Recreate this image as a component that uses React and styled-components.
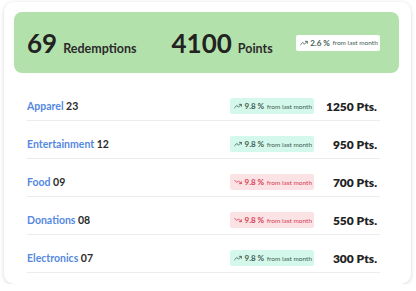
import styled, { createGlobalStyle } from "styled-components";
import { TrendingUp, TrendingDown } from "lucide-react";

const GlobalStyle = createGlobalStyle`
    body {
        margin: 0;
        background: #ffffff;
        font-family: Lato, "Noto Sans", sans-serif;
    }
`

const Card = styled.div`
    width: 407px;
    margin: 2px 0 0 4px;
    padding: 10px 12px 11px 10px;
    box-sizing: border-box;
    background: #ffffff;
    border-radius: 10px;
    box-shadow: 0 1px 4px rgba(0, 0, 0, 0.16);
`

const Banner = styled.div`
    height: 61px;
    background: #b3e1ab;
    border-radius: 8px;
    display: flex;
    align-items: center;
    padding-left: 13px;
`

const Stat = styled.div`
    display: flex;
    align-items: baseline;
    gap: 6px;
    margin-right: ${({ gap }) => gap}px;
    color: #222222;
`

const BigNumber = styled.span`
    font-size: 26px;
    font-weight: 700;
`

const StatLabel = styled.span`
    font-size: 12.5px;
    font-weight: 700;
    color: #2b2b2b;
`

const Badge = styled.div`
    width: 84px;
    height: 16px;
    box-sizing: border-box;
    border-radius: 2px;
    display: flex;
    align-items: center;
    gap: 2.5px;
    padding-left: 4px;
    background: ${({ tone }) => tone === "down" ? "#fbe2e4" : tone === "plain" ? "#ffffff" : "#d5f8ec"};
    color: ${({ tone }) => tone === "down" ? "#d63e55" : "#3f5d50"};
    white-space: nowrap;
    overflow: hidden;

    svg {
        flex-shrink: 0;
    }
`

const BadgeValue = styled.span`
    font-size: 8px;
    font-weight: 700;
`

const BadgeNote = styled.span`
    font-size: 6.5px;
    font-weight: 400;
`

const List = styled.div`
    margin: 10px 19px 0 13px;
`

const Row = styled.div`
    display: flex;
    align-items: center;
    padding: 15px 0 6px;
    border-bottom: 1px solid #ececec;
`

const Category = styled.div`
    flex: 1;
    font-size: 10.5px;
    font-weight: 700;
    color: #2b2b2b;
`

const CategoryName = styled.span`
    color: #5589df;
`

const Points = styled.div`
    width: 63px;
    text-align: right;
    padding-right: 3px;
    font-size: 12px;
    font-weight: 800;
    color: #222222;
`

const rows = [
    { name: "Apparel", count: "23", tone: "up", pts: "1250 Pts." },
    { name: "Entertainment", count: "12", tone: "up", pts: "950 Pts." },
    { name: "Food", count: "09", tone: "down", pts: "700 Pts." },
    { name: "Donations", count: "08", tone: "down", pts: "550 Pts." },
    { name: "Electronics", count: "07", tone: "up", pts: "300 Pts." },
]

const Trend = ({ tone, value }) => (
    <Badge tone={tone}>
        {tone === "down"
            ? <TrendingDown size={8} strokeWidth={2.5} />
            : <TrendingUp size={8} strokeWidth={2.5} />}
        <BadgeValue>{value}</BadgeValue>
        <BadgeNote>from last month</BadgeNote>
    </Badge>
)

const App = () => {
    return (
        <>
            <GlobalStyle />
            <Card>
                <Banner>
                    <Stat gap={35}>
                        <BigNumber>69</BigNumber>
                        <StatLabel>Redemptions</StatLabel>
                    </Stat>
                    <Stat gap={23}>
                        <BigNumber>4100</BigNumber>
                        <StatLabel>Points</StatLabel>
                    </Stat>
                    <Trend tone="plain" value="2.6 %" />
                </Banner>
                <List>
                    {rows.map((row) => (
                        <Row key={row.name}>
                            <Category>
                                <CategoryName>{row.name}</CategoryName> {row.count}
                            </Category>
                            <Trend tone={row.tone} value="9.8 %" />
                            <Points>{row.pts}</Points>
                        </Row>
                    ))}
                </List>
            </Card>
        </>
    )
}

export default App;
